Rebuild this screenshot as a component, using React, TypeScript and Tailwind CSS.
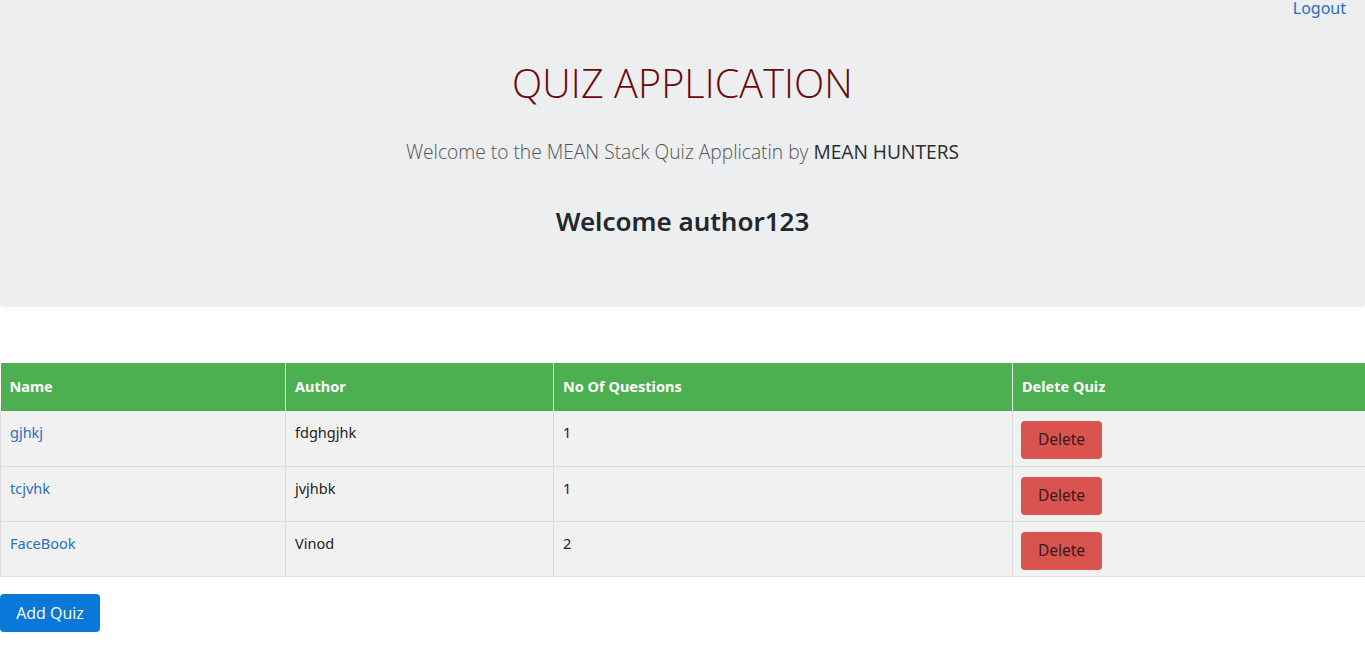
import React from "react";

const rows = [
  { name: "gjhkj", author: "fdghgjhk", n: "1" },
  { name: "tcjvhk", author: "jvjhbk", n: "1" },
  { name: "FaceBook", author: "Vinod", n: "2" },
];

export default function App() {
  return (
    <div className="min-h-[653px] bg-white" style={{ fontFamily: '"Noto Sans", "Open Sans", sans-serif' }}>
      <div className="relative h-[307px] rounded-b-[4px] bg-[#eceef0] flex flex-col items-center">
        <a className="absolute right-[19px] top-[1px] text-[16px] leading-[15px] text-[#2a6fc0]" href="#">Logout</a>
        <h1 className="mt-[56px] text-[39.5px] leading-[54px] font-light text-[#6b0a0a] tracking-[0.1px]" style={{ fontFamily: '"Open Sans", sans-serif' }}>QUIZ APPLICATION</h1>
        <p className="mt-[27px] text-[19.2px] leading-[30px] font-light text-[#555]" style={{ fontFamily: '"Open Sans", sans-serif' }}>
          Welcome to the MEAN Stack Quiz Applicatin by <span className="font-normal text-[#2b2b2b]">MEAN HUNTERS</span>
        </p>
        <h2 className="mt-[36px] text-[26px] leading-[36px] font-semibold text-[#23272b]">Welcome author123</h2>
      </div>

      <table className="mt-[56px] w-[1365px] border-collapse text-[14.5px]">
        <thead>
          <tr className="bg-[#4caf50] text-white h-[48px]">
            <th className="w-[285px] text-left font-bold pl-[9px] border-r border-[#e0f0e0]">Name</th>
            <th className="w-[268px] text-left font-bold pl-[9px] border-r border-[#e0f0e0]">Author</th>
            <th className="w-[459px] text-left font-bold pl-[9px] border-r border-[#e0f0e0]">No Of Questions</th>
            <th className="text-left font-bold pl-[9px]">Delete Quiz</th>
          </tr>
        </thead>
        <tbody>
          {rows.map((r) => (
            <tr key={r.name} className="bg-[#f1f1f1] h-[55px] border-b border-[#dcdcdc]">
              <td className="align-top pl-[9px] pt-[11px] border-l border-r border-[#dcdcdc] text-[#2a6fc0]">{r.name}</td>
              <td className="align-top pl-[9px] pt-[11px] border-r border-[#dcdcdc] text-[#222]">{r.author}</td>
              <td className="align-top pl-[9px] pt-[11px] border-r border-[#dcdcdc] text-[#222]">{r.n}</td>
              <td className="align-top pl-[8px] pt-[10px]">
                <button className="w-[81px] h-[38px] rounded-[4px] bg-[#d9534f] text-[#3b1a1a] text-[15.5px]">Delete</button>
              </td>
            </tr>
          ))}
        </tbody>
      </table>

      <button className="mt-[17px] w-[100px] h-[38px] rounded-[4px] bg-[#0a78d8] text-white text-[16px]" style={{ fontFamily: '"Open Sans", sans-serif' }}>Add Quiz</button>
    </div>
  );
}
